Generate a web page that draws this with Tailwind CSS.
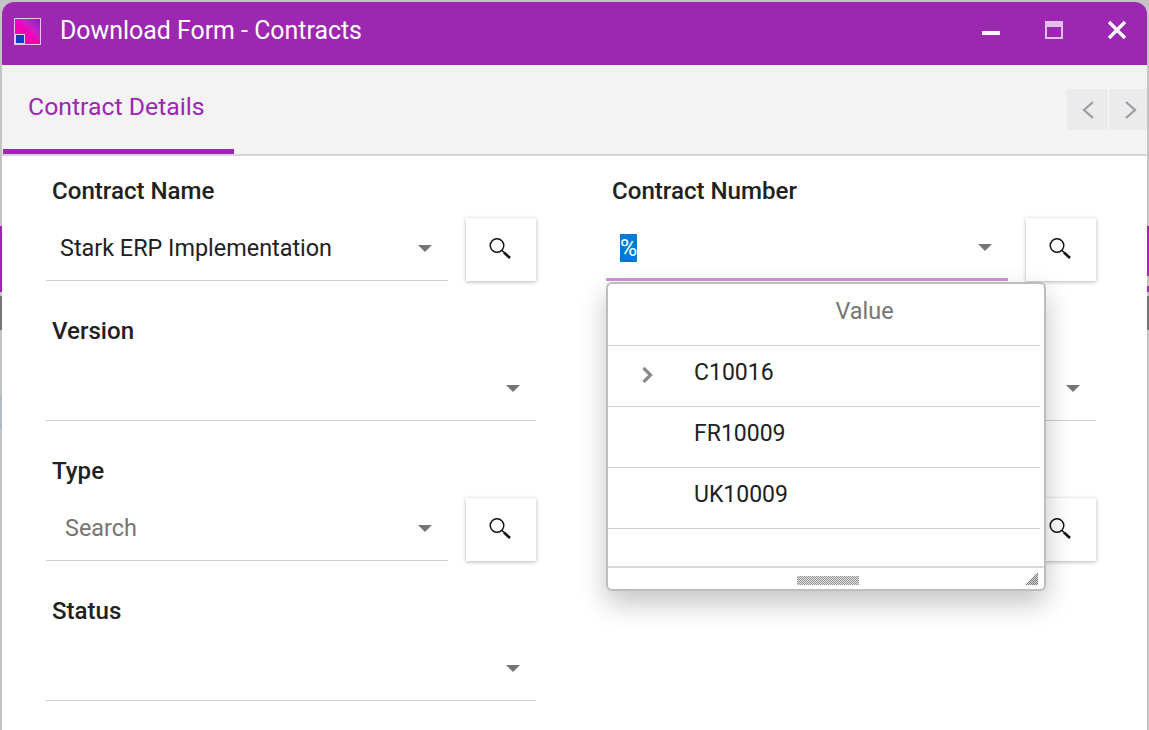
<!DOCTYPE html>
<html lang="en">
  <head>
    <meta charset="UTF-8" />
    <meta name="viewport" content="width=device-width, initial-scale=1.0" />
    <title>Download Form - Contracts</title>
    <script src="https://cdn.jsdelivr.net/npm/@tailwindcss/browser@4"></script>
  </head>
  <body class="relative h-[730px] overflow-hidden bg-[#c4c4c4] font-['Roboto',sans-serif]">
    <!-- App behind the window, only its edges show -->
    <div class="absolute inset-x-0 top-[226px] h-[66px] bg-[#9c27b0]"></div>
    <div class="absolute right-0 top-[276px] h-[10px] w-[2px] bg-[#c4c4c4]"></div>
    <div class="absolute inset-x-0 top-[296px] h-[34px] bg-[#757575]"></div>
    <div class="absolute left-0 top-[395px] h-[35px] w-[2px] bg-[#b0bcc4]"></div>

    <!-- Window -->
    <div class="relative z-10 ml-[2px] mt-[2px] flex h-[728px] w-[1145px] flex-col overflow-hidden rounded-t-[12px] bg-white">
      <!-- Title bar -->
      <div class="flex h-[63px] shrink-0 items-center bg-[#9c27b0] pl-[12px] text-white">
        <div class="relative mb-[4px] h-[27px] w-[27px] border border-[#e6c4ee] bg-gradient-to-tr from-[#ff00a8] via-[#f000b8] to-[#7a10d0]">
          <div class="absolute bottom-0 left-0 h-[10px] w-[10px] border border-[#d9d0f0] bg-[#0a3fc0]"></div>
        </div>
        <div class="mb-[5px] ml-[19px] text-[24.9px] leading-[56px]">Download Form - Contracts</div>
        <div class="-mr-[1px] ml-auto flex h-full items-center">
          <div class="flex w-[63px] justify-center pb-[1px]">
            <div class="h-[4px] w-[18px] bg-white"></div>
          </div>
          <div class="flex w-[63px] justify-center">
            <div class="mb-[7px] h-[18px] w-[18px] border-2 border-t-[6px] border-[#e4bfec]"></div>
          </div>
          <div class="flex w-[63px] justify-center pl-[1px]">
            <svg class="mb-[7px] h-[20px] w-[20px]" viewBox="0 0 20 20" fill="none" stroke="#fff" stroke-width="3.4">
              <path d="M2 2 18 18M18 2 2 18" />
            </svg>
          </div>
        </div>
      </div>

      <!-- Tab strip -->
      <div class="relative flex h-[91px] shrink-0 border-b-2 border-[#d6d6d6] bg-[#f3f3f3]">
        <div class="ml-px flex h-[89px] w-[231px] border-b-[5px] border-[#9c27b0] pl-[25px] pt-[26px] text-[24.8px] leading-[32px] text-[#9c27b0]">
          Contract Details
        </div>
        <div class="absolute right-0 top-[24px] flex h-[41px] w-[80px] bg-[#ebebeb]">
          <div class="flex w-[42px] items-center justify-center border-r border-[#f8f8f8]">
            <svg class="h-[20px] w-[14px]" viewBox="0 0 14 20" fill="none" stroke="#9b9ba3" stroke-width="2.2">
              <path d="M12 2 3 10l9 8" />
            </svg>
          </div>
          <div class="flex flex-1 items-center justify-center">
            <svg class="ml-[6px] h-[20px] w-[14px]" viewBox="0 0 14 20" fill="none" stroke="#9b9ba3" stroke-width="2.2">
              <path d="m2 2 9 8-9 8" />
            </svg>
          </div>
        </div>
      </div>

      <!-- Form -->
      <div class="relative grid grid-cols-[490px_490px] gap-x-[70px] pl-[44px] pt-[20px] text-[23.4px] text-[#212121]">
        <!-- Contract Name -->
        <div class="h-[140px]">
          <div class="h-[28px] pl-[6px] text-[24.1px] font-medium leading-[30px]">Contract Name</div>
          <div class="mt-[14px] flex">
            <div class="flex h-[63px] w-[402px] items-center border-b border-[#d0d0d0] pl-[14px] pr-[16px]">
              <span class="mb-[2px] leading-[60px]">Stark ERP Implementation</span>
              <div class="mb-[1px] ml-auto h-0 w-0 border-x-[7px] border-t-[7px] border-x-transparent border-t-[#757575]"></div>
            </div>
            <div class="ml-[18px] flex h-[63px] w-[70px] items-center justify-center bg-white shadow-[0_1px_4px_rgba(0,0,0,0.3)]">
              <svg class="mb-[3px] h-[24px] w-[24px]" viewBox="0 0 24 24" fill="none" stroke="#111">
                <circle cx="8" cy="9.5" r="6.8" stroke-width="1.5" />
                <path d="m12.8 14.3 2.2 2.2" stroke-width="1.5" />
                <path d="m15 16.5 6 5.5" stroke-width="2.6" />
              </svg>
            </div>
          </div>
        </div>
        <!-- Contract Number -->
        <div class="h-[140px]">
          <div class="h-[28px] pl-[6px] text-[24.1px] font-medium leading-[30px]">Contract Number</div>
          <div class="mt-[14px] flex">
            <div class="flex h-[63px] w-[402px] items-center border-b-[3px] border-[#ce93d8] pl-[14px] pr-[16px]">
              <span class="flex h-[28px] w-[17px] items-center justify-center bg-[#0078d7] pt-[2px] text-white">%</span>
              <div class="mb-[1px] ml-auto h-0 w-0 border-x-[7px] border-t-[7px] border-x-transparent border-t-[#757575]"></div>
            </div>
            <div class="ml-[18px] flex h-[63px] w-[70px] items-center justify-center bg-white shadow-[0_1px_4px_rgba(0,0,0,0.3)]">
              <svg class="mb-[3px] h-[24px] w-[24px]" viewBox="0 0 24 24" fill="none" stroke="#111">
                <circle cx="8" cy="9.5" r="6.8" stroke-width="1.5" />
                <path d="m12.8 14.3 2.2 2.2" stroke-width="1.5" />
                <path d="m15 16.5 6 5.5" stroke-width="2.6" />
              </svg>
            </div>
          </div>
        </div>
        <!-- Version -->
        <div class="h-[140px]">
          <div class="h-[28px] pl-[6px] text-[24.1px] font-medium leading-[30px]">Version</div>
          <div class="mt-[14px] flex h-[63px] items-center justify-end border-b border-[#d0d0d0] pr-[16px]">
            <div class="mb-[1px] h-0 w-0 border-x-[7px] border-t-[7px] border-x-transparent border-t-[#757575]"></div>
          </div>
        </div>
        <!-- Hidden under the popup -->
        <div class="h-[140px]">
          <div class="h-[28px]"></div>
          <div class="mt-[14px] flex h-[63px] items-center justify-end border-b border-[#d0d0d0] pr-[16px]">
            <div class="mb-[1px] h-0 w-0 border-x-[7px] border-t-[7px] border-x-transparent border-t-[#757575]"></div>
          </div>
        </div>
        <!-- Type -->
        <div class="h-[140px]">
          <div class="h-[28px] pl-[6px] text-[24.1px] font-medium leading-[30px]">Type</div>
          <div class="mt-[14px] flex">
            <div class="flex h-[63px] w-[402px] items-center border-b border-[#d0d0d0] pl-[19px] pr-[16px]">
              <span class="mb-[2px] leading-[60px] text-[#757575]">Search</span>
              <div class="mb-[1px] ml-auto h-0 w-0 border-x-[7px] border-t-[7px] border-x-transparent border-t-[#757575]"></div>
            </div>
            <div class="ml-[18px] flex h-[63px] w-[70px] items-center justify-center bg-white shadow-[0_1px_4px_rgba(0,0,0,0.3)]">
              <svg class="mb-[3px] h-[24px] w-[24px]" viewBox="0 0 24 24" fill="none" stroke="#111">
                <circle cx="8" cy="9.5" r="6.8" stroke-width="1.5" />
                <path d="m12.8 14.3 2.2 2.2" stroke-width="1.5" />
                <path d="m15 16.5 6 5.5" stroke-width="2.6" />
              </svg>
            </div>
          </div>
        </div>
        <div class="h-[140px]">
          <div class="h-[28px]"></div>
          <div class="mt-[14px] flex">
            <div class="h-[63px] w-[402px] border-b border-[#d0d0d0]"></div>
            <div class="ml-[18px] flex h-[63px] w-[70px] items-center justify-center bg-white shadow-[0_1px_4px_rgba(0,0,0,0.3)]">
              <svg class="mb-[3px] h-[24px] w-[24px]" viewBox="0 0 24 24" fill="none" stroke="#111">
                <circle cx="8" cy="9.5" r="6.8" stroke-width="1.5" />
                <path d="m12.8 14.3 2.2 2.2" stroke-width="1.5" />
                <path d="m15 16.5 6 5.5" stroke-width="2.6" />
              </svg>
            </div>
          </div>
        </div>
        <!-- Status -->
        <div class="h-[140px]">
          <div class="h-[28px] pl-[6px] text-[24.1px] font-medium leading-[30px]">Status</div>
          <div class="mt-[14px] flex h-[63px] items-center justify-end border-b border-[#d0d0d0] pr-[16px]">
            <div class="mb-[1px] h-0 w-0 border-x-[7px] border-t-[7px] border-x-transparent border-t-[#757575]"></div>
          </div>
        </div>

        <!-- Dropdown popup -->
        <div class="absolute left-[604px] top-[126px] z-20 flex h-[309px] w-[440px] flex-col overflow-hidden rounded-[6px] border-2 border-[#bdbdbd] bg-white shadow-[0_12px_28px_rgba(0,0,0,0.24)]">
          <div class="mr-[4px] flex h-[62px] shrink-0 items-center justify-center border-b border-[#d0d0d0] pb-[6px] pl-[81px] text-[#757575]">Value</div>
          <div class="mr-[4px] flex h-[61px] shrink-0 items-center border-b border-[#d0d0d0] pb-[6px] text-[23px]">
            <svg class="ml-[32px] mt-[3px] h-[20px] w-[14px]" viewBox="0 0 14 20" fill="none" stroke="#8a8a8a" stroke-width="3.2">
              <path d="m3.5 3 7 7-7 7" />
            </svg>
            <span class="ml-[40px]">C10016</span>
          </div>
          <div class="mr-[4px] flex h-[61px] shrink-0 items-center border-b border-[#d0d0d0] pb-[6px] pl-[86px] text-[23px]">FR10009</div>
          <div class="mr-[4px] flex h-[61px] shrink-0 items-center border-b border-[#d0d0d0] pb-[6px] pl-[86px] text-[23px]">UK10009</div>
          <div class="h-[39px] shrink-0 border-b-2 border-[#d8d8d8]"></div>
          <div class="relative flex-1">
            <div class="absolute left-[189px] top-[8px] h-[9px] w-[62px] bg-[repeating-conic-gradient(#8f8f8f_0_25%,#e8e8e8_0_50%)] bg-[length:2px_2px]"></div>
            <div class="absolute bottom-[4px] right-[6px] h-[13px] w-[13px] bg-[repeating-conic-gradient(#7a7a7a_0_25%,#d8d8d8_0_50%)] bg-[length:2px_2px] [clip-path:polygon(100%_0,100%_100%,0_100%)]"></div>
          </div>
        </div>
      </div>
    </div>
  </body>
</html>
